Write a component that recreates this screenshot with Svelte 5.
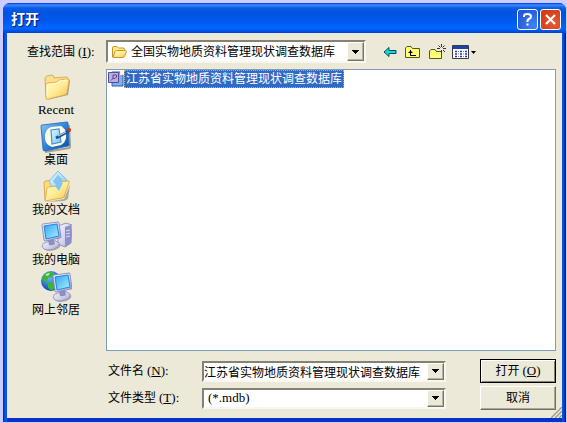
<script>
  const places = [
    { id: 'recent',   label: 'Recent' },
    { id: 'desktop',  label: '桌面' },
    { id: 'docs',     label: '我的文档' },
    { id: 'computer', label: '我的电脑' },
    { id: 'network',  label: '网上邻居' },
  ];

  const files = ['江苏省实物地质资料管理现状调查数据库'];

  let folder   = $state('全国实物地质资料管理现状调查数据库');
  let selected = $state(files[0]);
  let fileName = $state(files[0]);
  let fileType = $state('(*.mdb)');

  function pick(name) {
    selected = name;
    fileName = name;
  }
</script>

{#snippet arrow()}
  <svg width="7" height="4" viewBox="0 0 7 4" shape-rendering="crispEdges" aria-hidden="true">
    <path d="M0 0h7v1H6v1H5v1H4v1H3V3H2V2H1V1H0z" fill="#000" />
  </svg>
{/snippet}

{#snippet monitor()}
  <path d="M3 26q0-3 5-4l7-2 5 3q1 2-1 4-4 3-9 3-6 0-7-4z" fill="#6d6d80" opacity=".5" />
  <path d="M2 25q0-3 5-4l7-2 5 3q1 2-1 4-4 3-9 3-6 0-7-4z" fill="url(#plastic)" stroke="#8c8bb8" stroke-width=".8" />
  <path d="M8 19l6-1 1 5q-3 2-6 1z" fill="#8f90c0" />
  <path d="M2 4q0-1 1-1l15-2q1 0 1 1l2 14q0 1-1 1L5 20q-1 0-1-1z" fill="url(#plastic)" stroke="#7f82b8" stroke-width=".8" />
  <path d="M4 5l13-2 2 12-13 3z" fill="url(#screen)" stroke="#2483e0" />
{/snippet}

<div class="desktop">
  <svg class="defs" width="0" height="0" aria-hidden="true">
    <defs>
      <linearGradient id="folder" x1="0" y1="0" x2="1" y2="1">
        <stop offset="0" stop-color="#fffcc4" />
        <stop offset=".5" stop-color="#ffec98" />
        <stop offset="1" stop-color="#f6bf43" />
      </linearGradient>
      <linearGradient id="screen" x1="0" y1="0" x2="1" y2="1">
        <stop offset="0" stop-color="#35a3f8" />
        <stop offset="1" stop-color="#a4f2ff" />
      </linearGradient>
      <linearGradient id="plastic" x1="0" y1="0" x2="1" y2="1">
        <stop offset="0" stop-color="#f6f6ff" />
        <stop offset=".6" stop-color="#cfcfea" />
        <stop offset="1" stop-color="#9191c4" />
      </linearGradient>
      <linearGradient id="blue" x1="0" y1="0" x2="1" y2="1">
        <stop offset="0" stop-color="#8cc8f4" />
        <stop offset=".5" stop-color="#2d83db" />
        <stop offset="1" stop-color="#0d4aa8" />
      </linearGradient>
      <linearGradient id="paper" x1="0" y1="0" x2="1" y2="1">
        <stop offset="0" stop-color="#e4f7ff" />
        <stop offset="1" stop-color="#76c2f2" />
      </linearGradient>
      <radialGradient id="globe" cx=".4" cy=".3" r=".7">
        <stop offset="0" stop-color="#6fc0ff" />
        <stop offset="1" stop-color="#0744b8" />
      </radialGradient>
    </defs>
  </svg>

  <div class="window" role="dialog" aria-labelledby="title">
    <header class="titlebar">
      <h1 id="title">打开</h1>
      <button class="cap help" aria-label="帮助">
        <svg width="19" height="19" viewBox="0 0 19 19" fill="none" stroke="#fff" stroke-width="2">
          <path d="M6 7V6q0-2 3.500-2T13 6.500q0 1.500-2 2.500T9.500 12" />
          <path d="M8.500 14.500h2" />
        </svg>
      </button>
      <button class="cap close" aria-label="关闭">
        <svg width="19" height="19" viewBox="0 0 19 19" fill="none" stroke="#fff" stroke-width="2.200">
          <path d="M5 5l9 9M14 5l-9 9" />
        </svg>
      </button>
    </header>

    <div class="body">
      <div class="lookin">
        <label for="folder-select">查找范围<span class="lat">(<u>I</u>):</span></label>
        <div class="combo large">
          <svg class="small-folder" width="16" height="14" viewBox="0 0 16 14" aria-hidden="true">
            <path d="M1.500 12V3q0-1.500 1.500-1.500h3L7.500 3H12q1.500 0 1.500 1.500V11z" fill="#ffe98c" stroke="#c8962a" />
            <path d="M2 12.500l2-6q.5-1 1.500-1h9q1 0 1 1l-2 5q-.5 1-1.500 1z" fill="url(#folder)" stroke="#c8962a" />
          </svg>
          <select id="folder-select" bind:value={folder}>
            <option>全国实物地质资料管理现状调查数据库</option>
          </select>
          <span class="drop">{@render arrow()}</span>
        </div>

        <div class="tools">
          <button aria-label="后退">
            <svg width="14" height="16" viewBox="0 0 14 16">
              <path d="M1 8l5-4.500V6.500h7v3H6v3z" fill="#10dada" stroke="#064750" />
            </svg>
          </button>
          <button aria-label="向上一级">
            <svg width="16" height="16" viewBox="0 0 16 16">
              <path d="M.5 13.500V4L2 2.500h4L7.500 4.500h7v9z" fill="#ffff75" stroke="#55551c" />
              <path d="M5.500 6v5.500H11M3.500 8.500h4M4.500 7.500h2" fill="none" stroke="#000" />
            </svg>
          </button>
          <button aria-label="新建文件夹">
            <svg width="17" height="16" viewBox="0 0 17 16">
              <path d="M.5 14.500V7L2 5.500h4L7.500 7.500H12.500v7z" fill="#ffff75" stroke="#55551c" />
              <path d="M12.500 0v3M12.500 6v3M8 4.500h3M14 4.500h3M9.500 1.500l2 2M15.500 1.500l-2 2M14 6l2 2" stroke="#333" />
            </svg>
          </button>
          <button class="views" aria-label="查看">
            <svg width="24" height="16" viewBox="0 0 24 16">
              <path d="M.5 1.500h16v13H.5z" fill="#fff" stroke="#39394b" />
              <path d="M1 2h15v3H1z" fill="#1746a4" />
              <path d="M3 7.500h2M8 7.500h2M13 7.500h2M3 10h2M8 10h2M13 10h2M3 12.500h2M8 12.500h2M13 12.500h2" stroke="#2e2eae" stroke-width="1.500" />
              <path d="M6 7.500h1M11 7.500h1M6 10h1M11 10h1M6 12.500h1M11 12.500h1" stroke="#777" />
              <path d="M19 7h5l-2.500 3z" fill="#000" />
            </svg>
          </button>
        </div>
      </div>

      <div class="main">
        <nav class="places" aria-label="位置">
          {#each places as place}
            <button class="place">
              <svg width="32" height="32" viewBox="0 0 32 32" aria-hidden="true">
                {#if place.id === 'recent'}
                  <path d="M7 29l21-5 2-14-1-2-3 13z" fill="#6f6d5c" opacity=".6" />
                  <path d="M6 26L5 8q0-2 2-3l5-1q2 0 2 3l12-1q2 0 2 2L27 20z" fill="#fbe08a" stroke="#cfa144" stroke-width=".8" />
                  <path d="M6 28V14q0-2 2-2l9-1 2-2 9-1q1 0 1 2l-2 12q0 1-2 2L8 28z" fill="url(#folder)" stroke="#d9a640" stroke-width=".8" />
                  <path d="M7 25V14l11-2 2-2 7-1" fill="none" stroke="#fffde0" />
                {:else if place.id === 'desktop'}
                  <path d="M5 31l24-4q1 0 1-2l-1-21" fill="none" stroke="#55594e" stroke-width="2" opacity=".5" />
                  <path d="M1 5q0-1 1-1l25-3q1 0 1 1l1 22q0 1-1 1L5 30q-2 0-2-2z" fill="url(#blue)" stroke="#1e62b8" stroke-width=".8" />
                  <path d="M11 6l10-1q5 3 5 8v4q-1 5-5 7l-9 2q-6-2-7-8v-4q1-6 6-8z" fill="#fffbe2" />
                  <path d="M11 9l8-1 2 13-9 2z" fill="url(#paper)" stroke="#3c92dc" stroke-width="1.200" />
                  <path d="M16 17l13-7" stroke="#1d4f8c" stroke-width="3" />
                  <path d="M18 15l8-4" stroke="#9fd6f6" stroke-width="1.200" />
                  <circle cx="29" cy="9" r="2" fill="#cf2f1c" />
                {:else if place.id === 'docs'}
                  <path d="M6 31l18-3 6-14-2 14-4 2z" fill="#6f6d5c" opacity=".5" />
                  <path d="M5 29L4 12q0-2 2-2l6-1 3 2 12-1-3 16z" fill="#fbdc80" stroke="#cf9f3c" stroke-width=".8" />
                  <path d="M9 10l9-10 9 9-6 14h-6z" fill="url(#paper)" stroke="#7db4dc" stroke-width=".8" />
                  <path d="M13 10l5-6 5 6-5 6z" fill="#6db8ee" opacity=".7" />
                  <path d="M5 30l2-13q0-1 2-1l7-1 4-4 8-1q2 0 1 2l-5 14q-1 1-2 1z" fill="url(#folder)" stroke="#d9a640" stroke-width=".8" />
                  <path d="M15 15l5-4 3 1-4 8z" fill="#7fc3f0" />
                {:else if place.id === 'computer'}
                  <path d="M18 5l8-3 6 2-1 18-6 4-7-3z" fill="url(#plastic)" stroke="#8083b6" stroke-width=".8" />
                  <path d="M25 6l6-2v18l-6 4z" fill="#8d8fc6" />
                  <path d="M26 10l4-1M26 13l4-1M26 16l4-1" stroke="#e0e0f8" />
                  {@render monitor()}
                {:else}
                  <circle cx="11" cy="10" r="10" fill="url(#globe)" />
                  <path d="M3 5q3-4 7-4l4 1-2 4-4 1-1 4-5-2zM8 12l5-1 3 4-4 5-4-3z" fill="#3db536" />
                  <path d="M5 4q2-2 5-2l-2 3z" fill="#c4f2a8" />
                  <g transform="translate(11 1)">{@render monitor()}</g>
                {/if}
              </svg>
              <span class:lat={place.id === 'recent'}>{place.label}</span>
            </button>
          {/each}
        </nav>

        <div class="content">
          <ul class="files">
            {#each files as file}
              <li>
                <button class="file" class:active={selected === file} onclick={() => pick(file)}>
                  <svg width="17" height="16" viewBox="0 0 17 16" aria-hidden="true">
                    <path d="M5 1h8l3 3v11H5z" fill="#7db0f0" stroke="#315da9" />
                    <path d="M13 0v4h4z" fill="#e8f1ff" />
                    <path d="M1.500 1.500h10v10h-10z" fill="#b5b2e2" stroke="#5a4a94" />
                    <path d="M4 9.500L6.500 7M6 4h3.500v2L8 7.500H6z" fill="none" stroke="#6b3d8c" />
                  </svg>
                  <span>{file}</span>
                </button>
              </li>
            {/each}
          </ul>

          <div class="form">
            <div class="row">
              <label for="file-name">文件名<span class="lat sp">(<u>N</u>):</span></label>
              <div class="combo">
                <input id="file-name" type="text" bind:value={fileName} />
                <button class="drop" aria-label="文件名列表">{@render arrow()}</button>
              </div>
              <button class="btn default">打开<span class="lat sp">(<u>O</u>)</span></button>
            </div>
            <div class="row">
              <label for="file-type">文件类型<span class="lat sp">(<u>T</u>):</span></label>
              <div class="combo">
                <select id="file-type" class="lat" bind:value={fileType}>
                  <option>(*.mdb)</option>
                </select>
                <span class="drop">{@render arrow()}</span>
              </div>
              <button class="btn">取消</button>
            </div>
          </div>
        </div>
      </div>

      <svg class="grip" width="12" height="12" viewBox="0 0 12 12" aria-hidden="true">
        <path d="M0 12L12 0M4 12l8-8M8 12l4-4" stroke="#fff" stroke-width="1" />
        <path d="M1 12L12 1M5 12l7-7M9 12l3-3" stroke="#9d9a87" stroke-width="1.500" />
      </svg>
    </div>
  </div>
</div>

<style>
  :global(body) { margin: 0; }

  .desktop {
    box-sizing: border-box;
    min-height: 100vh;
    padding: 3px 1px 1px 3px;
    background: #ccccff;
    display: flex;
    font-family: 'Liberation Sans', 'Noto Sans CJK SC', sans-serif;
    font-size: 12px; line-height: 16px;
    color: #000;
  }
  .defs { position: absolute; }

  button, input, select {
    font: inherit; color: inherit;
    margin: 0; padding: 0;
    border: none; border-radius: 0; background: none;
  }
  svg { display: block; flex-shrink: 0; }

  /* Latin runs are set in a serif beside the Chinese text */
  .lat {
    font-family: 'Liberation Serif', serif;
    font-size: 13px;
  }
  .sp { margin-left: 3px; }

  .window {
    flex: 1; min-width: 0;
    display: flex; flex-direction: column;
    background: linear-gradient(90deg, #0019cf, #0855dd 2px, #0855dd calc(100% - 3px), #0014a0);
    border-radius: 7px 7px 0 0;
    overflow: hidden;
  }

  .titlebar {
    height: 30px;
    box-sizing: border-box;
    padding: 2px 5px 0 8px;
    display: flex; align-items: center; gap: 2px;
    background: linear-gradient(#0831d9 0, #3c8cff 2px, #0a5ce8 5px, #0053e0 10px, #0058ee 18px, #0066ff 25px, #005cf0 27px, #003dd7 30px);
  }
  h1 {
    flex: 1; margin: 0;
    font-size: 14px; font-weight: 700; line-height: 20px;
    color: #fff;
    text-shadow: 1px 1px 1px #0a1883;
  }
  .cap {
    width: 21px; height: 21px;
    border: 1px solid #fff; border-radius: 3px;
    background: radial-gradient(circle at 80% 80%, #3f83f8, #2456d8 80%);
  }
  .close { background: radial-gradient(circle at 70% 70%, #e65a31, #d23c16 80%); }

  .body {
    position: relative;
    flex: 1;
    margin: 0 4px;
    padding: 7px 6px 8px 7px;
    background: #ece9d8;
    border-bottom: 4px solid #0831c9;
    display: flex; flex-direction: column; gap: 6px;
  }

  .lookin { display: flex; align-items: center; }
  .lookin label { width: 79px; padding-left: 13px; }
  .lookin .lat { margin-left: 3px; }

  .combo {
    position: relative;
    box-sizing: border-box;
    flex: 1; min-width: 0; height: 21px;
    display: flex; align-items: center;
    background: #fff;
    border: 2px solid;
    border-color: #858274 #f8f7f0 #f8f7f0 #858274;
  }
  .large { flex: 0 1 260px; height: 23px; }
  .combo input, .combo select {
    flex: 1; min-width: 0; height: 100%;
    appearance: none;
    outline: none;
    white-space: nowrap;
  }
  .combo select { padding-left: 4px; }
  .small-folder { margin-left: 3px; }
  .drop {
    box-sizing: border-box;
    width: 17px; height: 100%;
    display: flex; align-items: center; justify-content: center;
    background: #ece9d8;
    border: 1px solid;
    border-color: #fff #77756a #77756a #fff;
    box-shadow: inset -1px -1px #b5b2a1;
  }
  span.drop {
    position: absolute; right: 0; top: 0;
    pointer-events: none;
  }

  .tools { display: flex; gap: 8px; margin-left: 17px; }
  .views { margin-left: -2px; }

  .main { flex: 1; display: flex; }
  .places {
    width: 92px;
    padding-top: 2px;
    flex-shrink: 0;
    display: flex; flex-direction: column; gap: 4px;
  }
  .place {
    width: 84px; height: 46px;
    display: flex; flex-direction: column; align-items: center;
    line-height: 14px;
  }

  .content { flex: 1; min-width: 0; display: flex; flex-direction: column; gap: 8px; }
  .files {
    flex: 1;
    margin: 0; padding: 0;
    list-style: none;
    background: #fff;
    border: 1px solid #7f9db9;
  }
  .file { display: flex; align-items: center; }
  .file span { padding: 0 1px; border: 1px dotted transparent; line-height: 16px; }
  .active span { background: #316ac5; border-color: #d8a35a; color: #fff; }

  .form { display: flex; flex-direction: column; gap: 3px; }
  .row { display: flex; align-items: center; }
  .row label { width: 94px; padding-left: 2px; flex-shrink: 0; }
  .btn {
    box-sizing: border-box;
    width: 76px; height: 24px;
    margin-left: 34px;
    flex-shrink: 0;
    border: 1px solid;
    border-color: #fff #716f64 #716f64 #fff;
    box-shadow: inset -1px -1px #aca899;
  }
  .default { border-color: #000; box-shadow: inset 1px 1px #fff, inset -1px -1px #858274; }

  .grip { position: absolute; right: 0; bottom: 0; }
</style>
